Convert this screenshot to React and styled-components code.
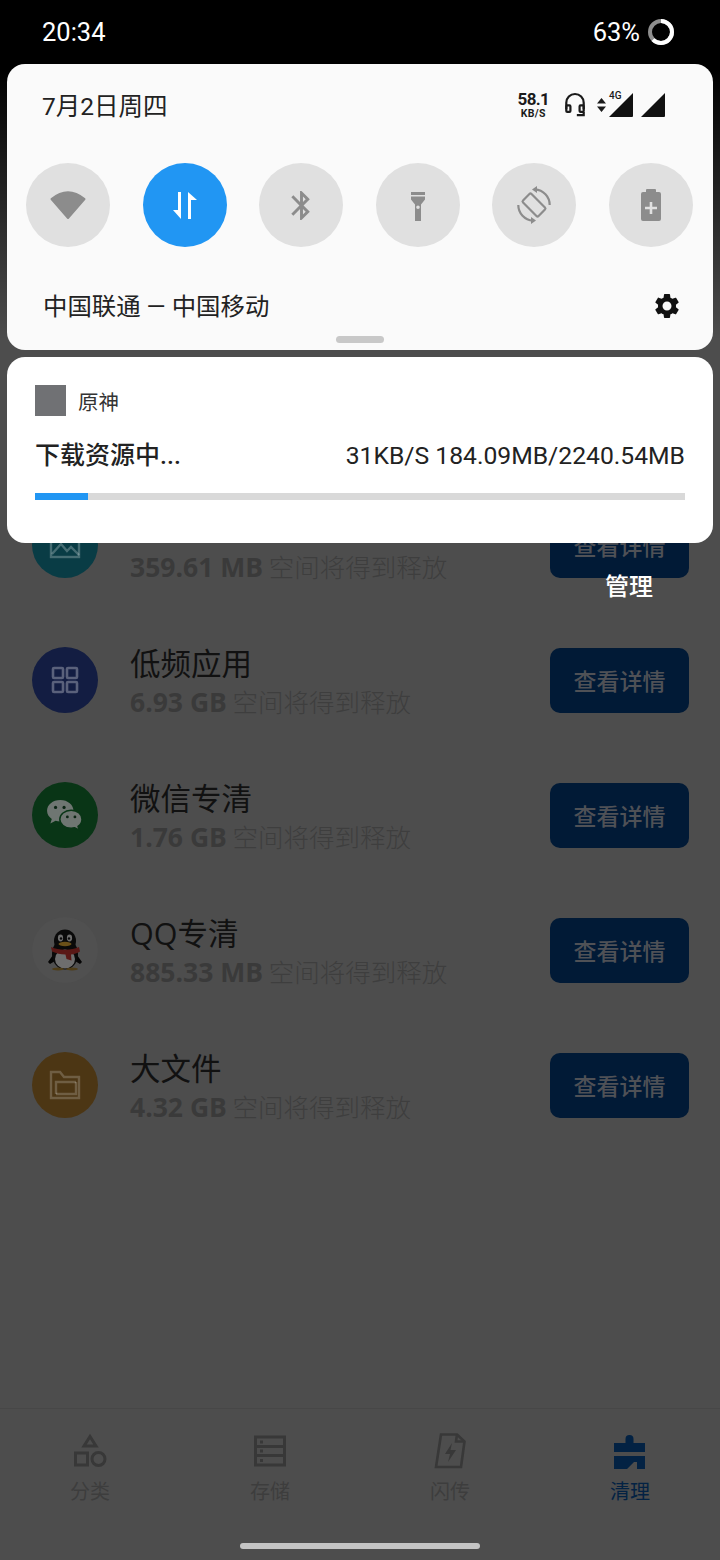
import styled, { createGlobalStyle } from "styled-components";

const CJK = `"Noto Sans CJK SC", sans-serif`;
const LATIN = `Roboto, "Noto Sans CJK SC", sans-serif`;

const GlobalStyle = createGlobalStyle`
  html, body {
    margin: 0;
    padding: 0;
    background: #4d4d4d;
  }
  * {
    box-sizing: border-box;
  }
`;

const rows = [
  { id: "photo", tone: "#093c45", title: "", size: "359.61 MB" },
  { id: "apps", tone: "#131d42", title: "低频应用", size: "6.93 GB" },
  { id: "wechat", tone: "#093516", title: "微信专清", size: "1.76 GB" },
  { id: "qq", tone: "#505050", title: "QQ专清", size: "885.33 MB" },
  { id: "files", tone: "#4c3614", title: "大文件", size: "4.32 GB" },
];

const tabs = [
  { id: "kinds", label: "分类" },
  { id: "storage", label: "存储" },
  { id: "send", label: "闪传" },
  { id: "clean", label: "清理", active: true },
];

const PhotoIcon = () => (
  <svg width="34" height="34" viewBox="0 0 34 34" fill="none" stroke="rgba(255,255,255,.25)" strokeWidth="2.4">
    <rect x="3" y="5" width="28" height="24" />
    <path d="M4 26l9-10 6 7 4-4 8 8" />
  </svg>
);

const AppsIcon = () => (
  <svg width="30" height="30" viewBox="0 0 30 30" fill="none" stroke="rgba(255,255,255,.3)" strokeWidth="2.6">
    <rect x="3" y="3" width="10" height="10" rx="1" />
    <rect x="17" y="3" width="10" height="10" rx="1" />
    <rect x="3" y="17" width="10" height="10" rx="1" />
    <rect x="17" y="17" width="10" height="10" rx="1" />
  </svg>
);

const WechatIcon = () => (
  <svg width="40" height="34" viewBox="0 0 42 36">
    <path d="M16 2C8 2 2 7 2 13.500c0 3.600 2 6.600 5 8.700L5.500 27l5.500-2.800c1.600.4 3.200.7 5 .7 8 0 14-5.200 14-11.400S24 2 16 2z" fill="#6f7672" />
    <path d="M27.500 13C20.500 13 15.500 17.500 15.500 22.500S20.500 32 27.500 32c1.300 0 2.600-.2 3.800-.5l4.700 2.500-1.200-4c2.700-1.800 4.200-4.500 4.200-7.500C39 17.500 34.500 13 27.500 13z" fill="#6f7672" stroke="#093516" strokeWidth="1.600" />
    <circle cx="11" cy="10" r="1.700" fill="#0b2413" />
    <circle cx="20" cy="10" r="1.700" fill="#0b2413" />
    <circle cx="23.500" cy="20" r="1.500" fill="#0b2413" />
    <circle cx="31.500" cy="20" r="1.500" fill="#0b2413" />
  </svg>
);

const PenguinIcon = () => (
  <svg width="36" height="42" viewBox="0 0 36 42">
    <path d="M6 26L1 33l2 2 5-3zM30 26l5 7-2 2-5-3z" fill="#050505" />
    <ellipse cx="18" cy="25" rx="13" ry="15.500" fill="#0a0a0a" />
    <ellipse cx="18" cy="12" rx="11" ry="11.500" fill="#0a0a0a" />
    <ellipse cx="18" cy="30" rx="10" ry="9.500" fill="#6e6e6e" />
    <ellipse cx="13.500" cy="9" rx="2.600" ry="3.400" fill="#6e6e6e" />
    <ellipse cx="22.500" cy="9" rx="2.600" ry="3.400" fill="#6e6e6e" />
    <circle cx="14" cy="9.500" r="1.200" fill="#0a0a0a" />
    <circle cx="22" cy="9.500" r="1.200" fill="#0a0a0a" />
    <ellipse cx="18" cy="15" rx="6.500" ry="2.200" fill="#6a5018" />
    <path d="M4 18c8 3.500 20 3.500 28 0l1 4.500c-3 1.700-6 2.700-9 3l.5 6-5-1.500-1-4.500c-5 0-9-1.300-13.500-3z" fill="#5a1816" />
    <ellipse cx="11" cy="40" rx="6" ry="1.500" fill="#4e3d18" />
    <ellipse cx="25" cy="40" rx="6" ry="1.500" fill="#4e3d18" />
  </svg>
);

const FolderIcon = () => (
  <svg width="32" height="30" viewBox="0 0 32 30" fill="none" stroke="rgba(255,255,255,.2)" strokeWidth="2.4">
    <path d="M2 28V2h9l4 5h15v21z" />
    <path d="M7 24V12h20" />
    <path d="M7 24h20V12" />
  </svg>
);

const rowIcons = {
  photo: PhotoIcon,
  apps: AppsIcon,
  wechat: WechatIcon,
  qq: PenguinIcon,
  files: FolderIcon,
};

const WifiIcon = () => (
  <svg width="48" height="48" viewBox="0 0 48 48" fill="#8c8c8c" stroke="#8c8c8c" strokeWidth="2" strokeLinejoin="round">
    <path d="M24 37L7.500 18Q24 4.500 40.500 18Z" />
  </svg>
);

const DataIcon = () => (
  <svg width="48" height="48" viewBox="0 0 48 48" fill="#fff">
    <path d="M17 11h3v27l-8-9h5zM27 11l9 8h-6v19h-3z" />
  </svg>
);

const BluetoothIcon = () => (
  <svg width="35" height="35" viewBox="0 0 24 24" fill="#8c8c8c">
    <path d="M17.710 7.710L12 2h-1v7.590L6.410 5 5 6.410 10.590 12 5 17.590 6.410 19 11 14.410V22h1l5.710-5.710-4.300-4.290 4.300-4.290zM13 5.830l1.880 1.880L13 9.590V5.830zm1.880 10.460L13 18.170v-3.760l1.880 1.880z" />
  </svg>
);

const TorchIcon = () => (
  <svg width="48" height="48" viewBox="0 0 48 48" fill="#8c8c8c">
    <path d="M17 11h14v3H17z" />
    <path fillRule="evenodd" d="M17 15.500h14v3l-4 5V40h-6V23.500l-4-5zM24 24.500a1.800 1.800 0 1 0 0 3.600 1.800 1.800 0 0 0 0-3.600z" />
  </svg>
);

const RotateIcon = () => (
  <svg width="48" height="48" viewBox="0 0 48 48" fill="none" stroke="#8c8c8c" strokeWidth="2.200">
    <rect x="18" y="13" width="12" height="22" rx="1.500" transform="rotate(-45 24 24)" />
    <path d="M25 8.300A15.700 15.700 0 0 1 39.700 24" />
    <path d="M23 39.700A15.700 15.700 0 0 1 8.300 24" />
    <path d="M27 5v7l-5-3.500z" fill="#8c8c8c" stroke="none" />
    <path d="M21 36v7l5-3.500z" fill="#8c8c8c" stroke="none" />
  </svg>
);

const BatterySaverIcon = () => (
  <svg width="48" height="48" viewBox="0 0 48 48" fill="#8c8c8c">
    <path fillRule="evenodd" d="M20 8h8a1 1 0 0 1 1 1v2h3a2 2 0 0 1 2 2v25a2 2 0 0 1-2 2H16a2 2 0 0 1-2-2V13a2 2 0 0 1 2-2h3V9a1 1 0 0 1 1-1zM22.700 21v4.700H18v2.600h4.700V33h2.600v-4.700H30v-2.600h-4.700V21z" />
  </svg>
);

const GearIcon = () => (
  <svg width="30" height="30" viewBox="0 0 24 24" fill="#111">
    <path d="M19.140 12.940c.04-.3.06-.61.06-.94 0-.32-.02-.64-.07-.94l2.030-1.580c.18-.14.23-.41.12-.61l-1.920-3.320c-.12-.22-.37-.29-.59-.22l-2.390.96c-.5-.38-1.030-.7-1.620-.94l-.36-2.540c-.04-.24-.24-.41-.48-.41h-3.840c-.24 0-.43.17-.47.41l-.36 2.540c-.59.24-1.130.57-1.620.94l-2.390-.96c-.22-.08-.47 0-.59.22L2.740 8.870c-.12.21-.08.47.12.61l2.030 1.580c-.05.3-.09.63-.09.94s.02.64.07.94l-2.030 1.580c-.18.14-.23.41-.12.61l1.920 3.320c.12.22.37.29.59.22l2.390-.96c.5.38 1.030.7 1.620.94l.36 2.540c.05.24.24.41.48.41h3.840c.24 0 .44-.17.47-.41l.36-2.540c.59-.24 1.130-.56 1.620-.94l2.390.96c.22.08.47 0 .59-.22l1.920-3.320c.12-.22.07-.47-.12-.61l-2.010-1.580zM12 15.600c-1.980 0-3.600-1.620-3.600-3.600s1.620-3.600 3.600-3.600 3.600 1.620 3.600 3.600-1.620 3.600-3.600 3.600z" />
  </svg>
);

const BatteryRing = () => (
  <svg width="28" height="28" viewBox="0 0 28 28" fill="none" strokeWidth="4">
    <circle cx="14" cy="14" r="11" stroke="#8e8e8e" />
    <circle cx="14" cy="14" r="11" stroke="#fff" pathLength="100" strokeDasharray="63 37" transform="rotate(-90 14 14)" />
  </svg>
);

const Headset = () => (
  <svg width="22" height="26" viewBox="0 0 24 27" fill="none" stroke="#1a1a1a" strokeWidth="2.400">
    <path d="M2.500 18v-7a9.500 9.500 0 0 1 19 0v7" />
    <rect x="2.500" y="14" width="4.500" height="7" rx="1" />
    <rect x="17" y="14" width="4.500" height="7" rx="1" />
    <path d="M21.500 21v3.500H14" />
  </svg>
);

const UpDown = () => (
  <svg width="9" height="14" viewBox="0 0 9 14" fill="#1a1a1a">
    <path d="M4.500 0L9 5.500H0zM4.500 14L0 8.500h9z" />
  </svg>
);

const Signal = () => (
  <svg width="24" height="24" viewBox="0 0 24 24" fill="#111">
    <path d="M24 0v23a1 1 0 0 1-1 1H0z" />
  </svg>
);

const KindsIcon = () => (
  <svg width="40" height="40" viewBox="0 0 40 40" fill="none" stroke="#383838" strokeWidth="3">
    <path d="M20 5.500l6 9.500H14z" />
    <rect x="5.500" y="22" width="12" height="12" />
    <circle cx="28.500" cy="28" r="6.500" />
  </svg>
);

const StorageIcon = () => (
  <svg width="40" height="40" viewBox="0 0 40 40" fill="none" stroke="#383838" strokeWidth="3">
    <rect x="5.500" y="6" width="29" height="28" />
    <path d="M5 15.500h30M5 24.500h30" />
    <path d="M10 11h3M10 20h3M10 29.500h3" />
  </svg>
);

const SendIcon = () => (
  <svg width="40" height="40" viewBox="0 0 40 40" fill="none" stroke="#383838" strokeWidth="2.600">
    <path d="M11 3.500h16l7.500 7L31 36H6z" />
    <path d="M27 3.500l-1 7h8" />
    <path d="M22 12l-7 11h5l-2 8 8-12h-5.500z" fill="#383838" stroke="none" />
  </svg>
);

const CleanIcon = () => (
  <svg width="40" height="40" viewBox="0 0 40 40" fill="#032243">
    <path d="M4 12h11.500V8a4 4 0 0 1 8 0v4H35v9H4z" />
    <path d="M4 25h31v13h-8v-7h-3l-7 7H4z" />
  </svg>
);

const tabIcons = {
  kinds: KindsIcon,
  storage: StorageIcon,
  send: SendIcon,
  clean: CleanIcon,
};

const tiles = [
  { id: "wifi", Icon: WifiIcon },
  { id: "data", Icon: DataIcon, on: true },
  { id: "bluetooth", Icon: BluetoothIcon },
  { id: "torch", Icon: TorchIcon },
  { id: "rotate", Icon: RotateIcon },
  { id: "battery", Icon: BatterySaverIcon },
];

export default function App() {
  return (
    <Screen>
      <GlobalStyle />
      <List>
        {rows.map((row) => {
          const Icon = rowIcons[row.id];
          return (
            <Row key={row.id}>
              <RowIcon $tone={row.tone}>
                <Icon />
              </RowIcon>
              <RowText>
                <RowTitle>{row.title}</RowTitle>
                <RowSub>
                  <b>{row.size}</b> 空间将得到释放
                </RowSub>
              </RowText>
              <DetailButton>查看详情</DetailButton>
            </Row>
          );
        })}
      </List>
      <Nav>
        {tabs.map((tab) => {
          const Icon = tabIcons[tab.id];
          return (
            <Tab key={tab.id} $active={tab.active}>
              <TabIcon>
                <Icon />
              </TabIcon>
              {tab.label}
            </Tab>
          );
        })}
      </Nav>
      <Manage>管理</Manage>
      <HomeBar />
      <Shade>
        <StatusBar>
          <span>20:34</span>
          <BatteryGroup>
            63%
            <BatteryRing />
          </BatteryGroup>
        </StatusBar>
        <QuickPanel>
          <DateRow>
            <DateText>7月2日周四</DateText>
            <Indicators>
              <Speed>
                <span>58.1</span>
                <small>KB/S</small>
              </Speed>
              <Headset />
              <MobileData>
                <UpDown />
                <SignalWrap>
                  <FourG>4G</FourG>
                  <Signal />
                </SignalWrap>
              </MobileData>
              <Signal />
            </Indicators>
          </DateRow>
          <Tiles>
            {tiles.map(({ id, Icon, on }) => (
              <Tile key={id} $on={on}>
                <Icon />
              </Tile>
            ))}
          </Tiles>
          <CarrierRow>
            <CarrierName>中国联通 — 中国移动</CarrierName>
            <GearIcon />
          </CarrierRow>
          <Handle />
        </QuickPanel>
        <Card>
          <CardHead>
            <AppThumb />
            原神
          </CardHead>
          <CardInfo>
            <strong>下载资源中...</strong>
            <span>31KB/S 184.09MB/2240.54MB</span>
          </CardInfo>
          <Track>
            <Fill style={{ width: `${(184.09 / 2240.54) * 100}%` }} />
          </Track>
        </Card>
      </Shade>
    </Screen>
  );
}

const Screen = styled.div`
  position: relative;
  width: 720px;
  height: 1560px;
  overflow: hidden;
  display: flex;
  flex-direction: column;
  background: #4d4d4d;
  font-family: ${CJK};
`;

const List = styled.div`
  flex: 1;
  padding-top: 478px;
`;

const Row = styled.div`
  height: 135px;
  display: flex;
  align-items: center;
  padding: 0 31px 0 32px;
`;

const RowIcon = styled.div`
  width: 66px;
  height: 66px;
  flex: none;
  margin-top: -2px;
  border-radius: 50%;
  display: flex;
  align-items: center;
  justify-content: center;
  background: ${(p) => p.$tone};
`;

const RowText = styled.div`
  flex: 1;
  margin-left: 32px;
  display: flex;
  flex-direction: column;
`;

const RowTitle = styled.div`
  min-height: 42px;
  padding-top: 2px;
  font-family: "Open Sans", ${CJK};
  font-size: 30.5px;
  line-height: 40px;
  color: #111;
`;

const RowSub = styled.div`
  font-size: 25.5px;
  line-height: 35px;
  font-weight: 300;
  color: #3e3e3e;

  b {
    font-family: "Open Sans", ${CJK};
    font-size: 26.5px;
    font-weight: 700;
    color: #3a3a3a;
  }
`;

const DetailButton = styled.div`
  width: 139px;
  height: 65px;
  flex: none;
  padding-bottom: 2px;
  border-radius: 10px;
  display: flex;
  align-items: center;
  justify-content: center;
  background: #011a36;
  color: #4f5156;
  font-size: 23px;
  font-weight: 500;
`;

const Nav = styled.nav`
  height: 152px;
  flex: none;
  display: grid;
  grid-template-columns: repeat(4, 1fr);
  padding-top: 22px;
  border-top: 1px solid #474747;
`;

const Tab = styled.div`
  display: flex;
  flex-direction: column;
  align-items: center;
  gap: 5px;
  font-size: 20px;
  line-height: 30px;
  color: ${(p) => (p.$active ? "#032243" : "#3d3d3d")};
`;

const TabIcon = styled.div`
  width: 40px;
  height: 40px;
`;

const Manage = styled.div`
  position: absolute;
  top: 568px;
  left: 605px;
  font-size: 24px;
  line-height: 34px;
  font-weight: 500;
  color: #fff;
`;

const HomeBar = styled.div`
  position: absolute;
  left: 240px;
  bottom: 11px;
  width: 240px;
  height: 6px;
  border-radius: 3px;
  background: #c4c4c4;
`;

const Shade = styled.div`
  position: absolute;
  top: 0;
  left: 0;
  right: 0;
  padding: 0 7px;
  background: linear-gradient(#000 64px, #000 70px, rgba(0, 0, 0, 0) 340px);
`;

const StatusBar = styled.div`
  height: 64px;
  display: flex;
  align-items: center;
  justify-content: space-between;
  padding: 0 38px 0 35px;
  color: #fff;
  font-family: ${LATIN};
  font-size: 25.5px;
`;

const BatteryGroup = styled.span`
  display: flex;
  align-items: center;
  gap: 7px;
`;

const QuickPanel = styled.section`
  position: relative;
  height: 286px;
  display: flex;
  flex-direction: column;
  border-radius: 18px;
  background: #fafafa;
`;

const DateRow = styled.div`
  height: 82px;
  display: flex;
  align-items: center;
  justify-content: space-between;
  padding: 0 48px 0 35px;
`;

const DateText = styled.span`
  margin-bottom: 2px;
  font-family: ${LATIN};
  font-size: 24.5px;
  color: #222;
`;

const Indicators = styled.div`
  display: flex;
  align-items: center;
  gap: 8px;
`;

const Speed = styled.div`
  display: flex;
  flex-direction: column;
  align-items: center;
  margin-right: 7px;
  font-family: Roboto, sans-serif;
  font-weight: 700;
  color: #1a1a1a;

  span {
    font-size: 17px;
    line-height: 17px;
    letter-spacing: -0.7px;
  }

  small {
    font-size: 10.5px;
    line-height: 12px;
    letter-spacing: 0.3px;
  }
`;

const MobileData = styled.div`
  display: flex;
  align-items: center;
  gap: 3px;
  margin-left: 3px;
`;

const SignalWrap = styled.div`
  position: relative;
  height: 24px;
`;

const FourG = styled.span`
  position: absolute;
  top: -3px;
  left: 0;
  font-family: Roboto, sans-serif;
  font-size: 10px;
  line-height: 12px;
  font-weight: 500;
  color: #1a1a1a;
`;

const Tiles = styled.div`
  display: flex;
  justify-content: space-between;
  padding: 17px 20px 0 19px;
`;

const Tile = styled.div`
  width: 84px;
  height: 84px;
  border-radius: 50%;
  display: flex;
  align-items: center;
  justify-content: center;
  background: ${(p) => (p.$on ? "#2196f3" : "#e0e0e0")};
`;

const CarrierRow = styled.div`
  display: flex;
  align-items: center;
  justify-content: space-between;
  margin-top: 41px;
  padding: 0 31px 0 36px;
  font-family: ${LATIN};
  font-size: 24.4px;
  line-height: 34px;
  color: #222;
`;

const CarrierName = styled.span`
  margin-top: 2px;
`;

const Handle = styled.div`
  position: absolute;
  left: 329px;
  bottom: 7px;
  width: 48px;
  height: 7px;
  border-radius: 4px;
  background: #c8c8c8;
`;

const Card = styled.section`
  height: 186px;
  margin-top: 7px;
  padding: 28px 28px 0;
  border-radius: 18px;
  background: #fff;
`;

const CardHead = styled.div`
  display: flex;
  align-items: center;
  gap: 12px;
  font-size: 20.5px;
  color: #333;
`;

const AppThumb = styled.div`
  width: 31px;
  height: 31px;
  background: #707174;
`;

const CardInfo = styled.div`
  display: flex;
  align-items: center;
  justify-content: space-between;
  margin-top: 22px;
  font-family: ${LATIN};
  font-size: 24.7px;
  line-height: 36px;
  color: #222;

  strong {
    font-size: 25px;
    font-weight: 500;
  }
`;

const Track = styled.div`
  height: 7px;
  margin-top: 19px;
  background: #d9d9d9;
`;

const Fill = styled.div`
  height: 100%;
  background: #2196f3;
`;
